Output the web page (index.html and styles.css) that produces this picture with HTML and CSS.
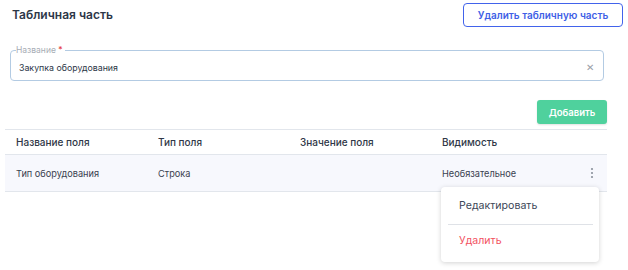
FILE: index.html
```html
<!DOCTYPE html>
<html lang='ru'>
<head>
    <meta charset='UTF-8'>
    <meta name='viewport' content='width=device-width, initial-scale=1.0'>
    <title>Табличная часть</title>
    <link rel="stylesheet" href="styles.css">
</head>
<body>
    <div id='content'>
        <header>
            <h2>Табличная часть</h2>
            <button type='button' class='btn-outline'>Удалить табличную часть</button>
        </header>

        <fieldset class='field'>
            <legend>Название <span class='req'>*</span></legend>
            <input type='text' value='Закупка оборудования'>
            <span class='clear'>&#x2715;</span>
        </fieldset>

        <div class='actions'>
            <button type='button' class='btn-add'>Добавить</button>
        </div>

        <div class='table-wrap'>
            <table>
                <thead>
                    <tr>
                        <th>Название поля</th>
                        <th>Тип поля</th>
                        <th>Значение поля</th>
                        <th>Видимость</th>
                        <th class='col-menu'></th>
                    </tr>
                </thead>
                <tbody>
                    <tr>
                        <td>Тип оборудования</td>
                        <td>Строка</td>
                        <td></td>
                        <td>Необязательное</td>
                        <td class='col-menu'>
                            <svg class='kebab' width='4' height='12' viewBox='0 0 4 12'>
                                <circle cx='2' cy='2' r='1.1'/>
                                <circle cx='2' cy='6' r='1.1'/>
                                <circle cx='2' cy='10' r='1.1'/>
                            </svg>
                        </td>
                    </tr>
                </tbody>
            </table>

            <div class='menu'>
                <div class='menu-item'>Редактировать</div>
                <div class='menu-sep'></div>
                <div class='menu-item danger'>Удалить</div>
            </div>
        </div>
    </div>
</body>
</html>
```

FILE: styles.css
```css
html, body {
    margin: 0; padding: 0;
    background: white;
    font-family: Inter, "Noto Sans", sans-serif;
    color: #2d3748;
}
body { min-height: 270px; }
#content { padding: 3px 5px 0 5px; }

header {
    display: flex;
    justify-content: space-between;
    align-items: flex-start;
}
h2 {
    margin: 4px 0 0 7px;
    font-size: 12px; font-weight: 600;
    line-height: 16px;
    color: #2d3748;
}
.btn-outline {
    height: 24px; width: 160px;
    border: 1px solid #4263eb;
    border-radius: 4px;
    background: white;
    color: #3f5fe6;
    font-family: inherit;
    font-size: 10px; font-weight: 600;
    padding: 0;
}

.field {
    display: flex;
    align-items: center;
    margin: 19px 19px 0 5px;
    padding: 0 9px 0 8px;
    height: 35px;
    box-sizing: border-box;
    border: 1px solid #b3cbe3;
    border-radius: 4px;
}
.field legend {
    font-size: 8.5px;
    line-height: 8px;
    color: #a7adb5;
    padding: 0 2px 0 0;
    margin-left: -3px;
}
.req { color: #e53e3e; }
.field input {
    flex: 1;
    border: 0; outline: none;
    padding: 0; margin: 0;
    font-family: inherit;
    font-size: 8.8px;
    color: #2d3748;
    background: transparent;
}
.clear {
    font-size: 10px;
    color: #9aa0a8;
}

.actions {
    display: flex;
    justify-content: flex-end;
    margin: 19px 16px 0 0;
}
.btn-add {
    height: 24px; width: 70px;
    border: 0;
    border-radius: 3px;
    background: #4fd19d;
    color: white;
    font-family: inherit;
    font-size: 9.5px; font-weight: 600;
    padding: 0;
    box-shadow: 0 1px 2px rgba(0,0,0,0.12);
}

.table-wrap {
    position: relative;
    margin: 5px 16px 0 0;
}
table {
    width: 100%;
    border-collapse: collapse;
    font-size: 10px;
}
th, td {
    text-align: left;
    padding: 0 0 0 11px;
    width: 131px;
}
th {
    height: 24px;
    font-weight: 500;
    color: #2f3747;
    border-top: 1px solid #e2e6ec;
    border-bottom: 1px solid #e2e6ec;
}
td {
    height: 36px;
    font-size: 9.2px;
    color: #3a4150;
    background: #f7f8fd;
    border-bottom: 1px solid #e2e6ec;
}
th.col-menu, td.col-menu {
    width: auto;
    text-align: right;
    padding-right: 13px;
}
.kebab { fill: #8a919c; vertical-align: middle; }

.menu {
    position: absolute;
    left: 436px; top: 58px;
    width: 158px;
    box-sizing: border-box;
    background: white;
    border-radius: 4px;
    box-shadow: 0 1px 5px rgba(0,0,0,0.18);
    padding: 11px 0 13px;
}
.menu-item {
    font-size: 10.6px;
    line-height: 16px;
    padding: 0 18px;
    color: #3c4658;
}
.menu-sep {
    height: 1px;
    background: #dfe2e7;
    margin: 10px 6px 8px 7px;
}
.danger { color: #f2525f; }
```
